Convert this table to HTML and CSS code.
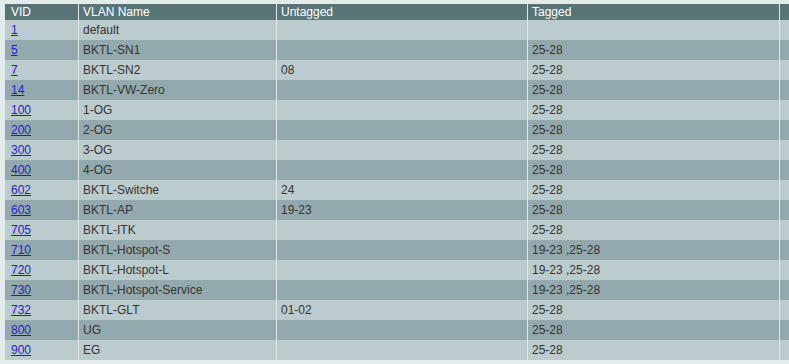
FILE: index.html
```html
<!DOCTYPE html>
<html>
<head>
<meta charset="utf-8">
<link rel="stylesheet" href="styles.css">
</head>
<body>
<div class="page">
<table class="vlan">
<colgroup>
<col class="c-vid"><col class="c-name"><col class="c-untag"><col class="c-tag"><col class="c-rest">
</colgroup>
<thead>
<tr><th>VID</th><th>VLAN Name</th><th>Untagged</th><th>Tagged</th><th></th></tr>
</thead>
<tbody>
<tr><td><a href="#">1</a></td><td>default</td><td></td><td></td><td></td></tr>
<tr><td><a href="#">5</a></td><td>BKTL-SN1</td><td></td><td>25-28</td><td></td></tr>
<tr><td><a href="#">7</a></td><td>BKTL-SN2</td><td>08</td><td>25-28</td><td></td></tr>
<tr><td><a href="#">14</a></td><td>BKTL-VW-Zero</td><td></td><td>25-28</td><td></td></tr>
<tr><td><a href="#">100</a></td><td>1-OG</td><td></td><td>25-28</td><td></td></tr>
<tr><td><a href="#">200</a></td><td>2-OG</td><td></td><td>25-28</td><td></td></tr>
<tr><td><a href="#">300</a></td><td>3-OG</td><td></td><td>25-28</td><td></td></tr>
<tr><td><a href="#">400</a></td><td>4-OG</td><td></td><td>25-28</td><td></td></tr>
<tr><td><a href="#">602</a></td><td>BKTL-Switche</td><td>24</td><td>25-28</td><td></td></tr>
<tr><td><a href="#">603</a></td><td>BKTL-AP</td><td>19-23</td><td>25-28</td><td></td></tr>
<tr><td><a href="#">705</a></td><td>BKTL-ITK</td><td></td><td>25-28</td><td></td></tr>
<tr><td><a href="#">710</a></td><td>BKTL-Hotspot-S</td><td></td><td>19-23 ,25-28</td><td></td></tr>
<tr><td><a href="#">720</a></td><td>BKTL-Hotspot-L</td><td></td><td>19-23 ,25-28</td><td></td></tr>
<tr><td><a href="#">730</a></td><td>BKTL-Hotspot-Service</td><td></td><td>19-23 ,25-28</td><td></td></tr>
<tr><td><a href="#">732</a></td><td>BKTL-GLT</td><td>01-02</td><td>25-28</td><td></td></tr>
<tr><td><a href="#">800</a></td><td>UG</td><td></td><td>25-28</td><td></td></tr>
<tr><td><a href="#">900</a></td><td>EG</td><td></td><td>25-28</td><td></td></tr>
</tbody>
</table>
</div>
</body>
</html>
```
FILE: styles.css
```css
html, body {
  margin: 0;
  padding: 0;
  background: #e4ebeb;
  overflow: hidden;
}
.page {
  padding: 4px 0 0 5px;
}
.vlan {
  border-collapse: separate;
  border-spacing: 0;
  table-layout: fixed;
  width: 784px;
  font-family: "Liberation Sans", Arial, sans-serif;
  font-size: 12px;
  color: #333333;
}
.c-vid { width: 74px; }
.c-name { width: 198px; }
.c-untag { width: 251px; }
.c-tag { width: 252px; }
.c-rest { width: 9px; }
.vlan th, .vlan td {
  box-sizing: border-box;
  border-right: 1px solid #e0e8e9;
  padding: 0 0 0 4px;
  text-align: left;
  white-space: nowrap;
  overflow: hidden;
}
.vlan th:last-child, .vlan td:last-child {
  border-right: none;
  padding: 0;
}
.vlan th:first-child, .vlan td:first-child {
  padding-left: 6px;
}
.vlan th {
  background: #597477;
  color: #ffffff;
  font-weight: normal;
  height: 16px;
  line-height: 16px;
}
.vlan td {
  height: 20px;
  line-height: 20px;
}
.vlan tbody tr:nth-child(odd) td { background: #bccbcd; }
.vlan tbody tr:nth-child(even) td { background: #94a9ad; }
.vlan a {
  color: #1f1fbf;
  text-decoration: underline;
}
```
